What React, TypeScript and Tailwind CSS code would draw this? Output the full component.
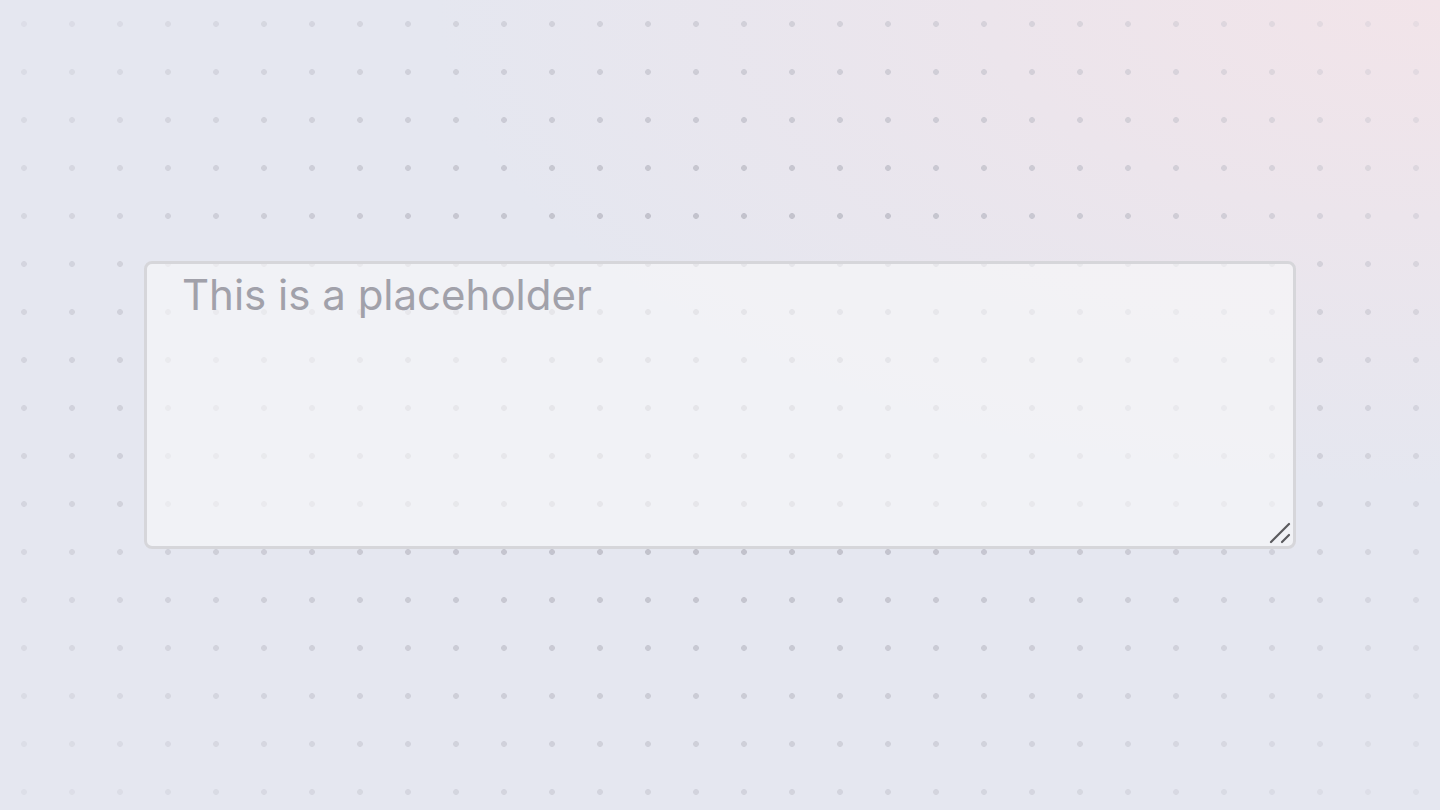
import React from "react";

export default function App() {
  return (
    <div className="relative w-[1440px] h-[810px] overflow-hidden bg-[#e5e7f0]" style={{ fontFamily: "Inter, 'Noto Sans', sans-serif" }}>
      <div className="absolute inset-0 bg-[radial-gradient(ellipse_70%_60%_at_100%_0%,#f2e4e9_0%,#ece5ec_45%,transparent_100%)]" />
      <div className="absolute inset-0 bg-[radial-gradient(circle,#bcbcc6_2.6px,transparent_3.2px)] bg-[size:48px_48px] [mask-image:radial-gradient(ellipse_65%_70%_at_50%_48%,black_15%,rgba(0,0,0,0.18)_100%)]" />
      <div className="relative flex h-full w-full items-center justify-center">
        <div className="relative w-[80%] h-72">
          <textarea
            placeholder="This is a placeholder"
            className="block w-full h-full resize-none rounded-lg border-[3px] border-[#d6d6da] bg-[#f7f7f8]/70 pl-[35px] pr-9 py-0 text-[42px] leading-[1.48] text-zinc-700 placeholder:text-[#a1a1aa] outline-none"
          />
          <svg className="pointer-events-none absolute right-[4px] bottom-[4px]" width="24" height="24" viewBox="0 0 24 24">
            <line x1="3" y1="21" x2="21" y2="3" stroke="#5a5a5e" strokeWidth="2.2" strokeLinecap="round" />
            <line x1="14" y1="21" x2="21" y2="14" stroke="#5a5a5e" strokeWidth="2.2" strokeLinecap="round" />
          </svg>
        </div>
      </div>
    </div>
  );
}
